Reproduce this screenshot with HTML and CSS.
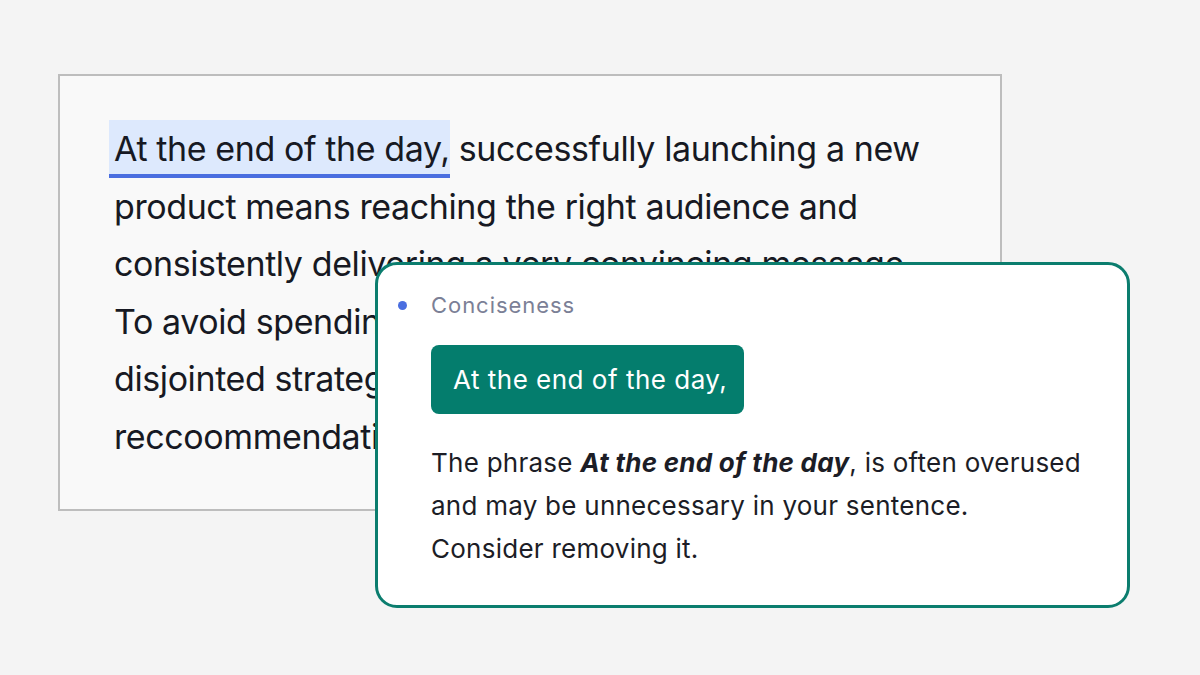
FILE: index.html
```html
<!DOCTYPE html>
<html>
<head>
<meta charset="utf-8">
<link rel="stylesheet" href="styles.css">
</head>
<body>
<div class="stage">
  <div class="doc">
    <p class="doc-text"><span class="flag">At the end of the day,</span> successfully launching a new<br>product means reaching the right audience and<br>consistently delivering a very convincing message.<br>To avoid spending time and money on a<br>disjointed strategy, follow these<br>reccoommendations to get it right.</p>
  </div>
  <div class="card">
    <div class="card-head"><span class="dot"></span><span class="cat">Conciseness</span></div>
    <div class="suggest">At the end of the day,</div>
    <p class="expl">The phrase <b><i>At the end of the day</i></b>, is often overused<br>and may be unnecessary in your sentence.<br>Consider removing it.</p>
  </div>
</div>
</body>
</html>
```
FILE: styles.css
```css
html, body {
  margin: 0;
  padding: 0;
  background: #f4f4f4;
  font-family: Inter, "Noto Sans", sans-serif;
}
.stage {
  position: relative;
  width: 1200px;
  height: 675px;
  overflow: hidden;
  padding-top: 74px;
  box-sizing: border-box;
}
.doc {
  margin-left: 58px;
  width: 944px;
  height: 437px;
  box-sizing: border-box;
  border: 2px solid #bdbdbd;
  background: #f9f9f9;
  padding: 44px 0 0 54px;
}
.doc-text {
  margin: 0;
  font-size: 34px;
  letter-spacing: -0.4px;
  line-height: 57.5px;
  color: #171923;
  white-space: nowrap;
}
.flag {
  display: inline-block;
  background: #dde9fd;
  box-shadow: inset 0 -4px 0 #4a6ee0;
  padding-left: 5px;
  margin-left: -5px;
}
.card {
  position: absolute;
  left: 375px;
  top: 262px;
  width: 755px;
  height: 346px;
  box-sizing: border-box;
  border: 3px solid #0b7d6e;
  border-radius: 22px;
  background: #ffffff;
  padding: 25px 0 0 53px;
}
.card-head {
  display: flex;
  align-items: center;
  height: 30px;
}
.dot {
  width: 9px;
  height: 9px;
  border-radius: 50%;
  background: #4a6ee0;
  margin-left: -33px;
  margin-right: 24px;
}
.cat {
  font-size: 22px;
  color: #7b8096;
  letter-spacing: 0.95px;
}
.suggest {
  display: inline-block;
  margin-top: 25px;
  background: #047d6d;
  color: #ffffff;
  font-size: 26px;
  letter-spacing: 0.5px;
  line-height: 69px;
  padding: 0 17px 0 22px;
  border-radius: 8px;
}
.expl {
  margin: 27px 0 0 0;
  font-size: 26px;
  line-height: 43px;
  color: #1c1d26;
  letter-spacing: 0.25px;
}
.expl b {
  font-weight: 700;
}
```
